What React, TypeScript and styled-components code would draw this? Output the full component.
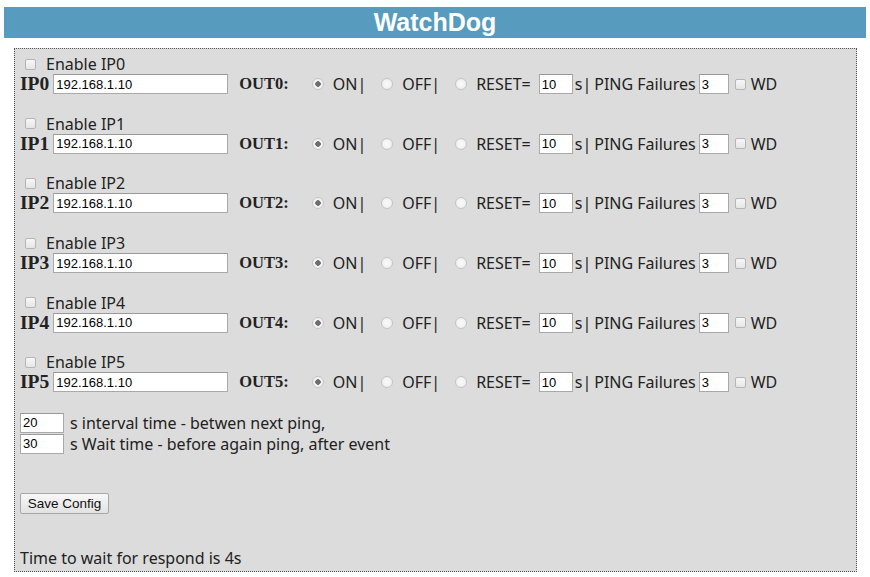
import React from 'react';
import styled, { createGlobalStyle } from 'styled-components';

const GlobalStyle = createGlobalStyle`
  body {
    margin: 0;
    background: #ffffff;
    font-family: 'Noto Sans', 'Liberation Sans', Arial, sans-serif;
    color: #222;
  }
`;

const Page = styled.div`
  padding: 7px 4px 0 4px;
`;

const Header = styled.h1`
  margin: 0;
  height: 31px;
  background: #579cbf;
  color: #fff;
  font-family: 'Liberation Sans', Arial, sans-serif;
  font-weight: bold;
  font-size: 25px;
  line-height: 31px;
  text-align: center;
`;

const Panel = styled.div`
  margin: 10px 9px 0 10px;
  padding: 5px 5px 3px 5px;
  background: #dcdcdc;
  border: 1px dotted #555;
  font-size: 16px;
  line-height: 20px;
`;

const Block = styled.div`
  margin-bottom: 19.7px;
`;

const Line = styled.div<{ $h?: number }>`
  display: flex;
  align-items: center;
  height: ${(p) => p.$h || 20}px;
  white-space: nowrap;
`;

const Check = styled.input.attrs({ type: 'checkbox' })<{ $ml?: number; $mr?: number }>`
  appearance: none;
  margin: 0 ${(p) => p.$mr ?? 4}px 0 ${(p) => p.$ml ?? 0}px;
  width: 11px;
  height: 11px;
  border: 1px solid #b5b5b5;
  border-radius: 2px;
  background: linear-gradient(#f7f7f7, #e6e6e6);
  flex-shrink: 0;
`;

const Radio = styled.input.attrs({ type: 'radio' })<{ $ml: number }>`
  appearance: none;
  margin: 0 9px 0 ${(p) => p.$ml}px;
  width: 12px;
  height: 12px;
  border: 1px solid #c4c4c4;
  border-radius: 50%;
  background: radial-gradient(circle, #fafafa 0, #ececec 100%);
  flex-shrink: 0;
  &:checked {
    background: radial-gradient(circle, #6d6d6d 0, #6d6d6d 2.5px, #f2f2f2 3px);
  }
`;

const Label = styled.b<{ $ml?: number }>`
  font-family: 'Liberation Serif', 'Times New Roman', serif;
  font-size: 19.5px;
  margin-left: ${(p) => p.$ml ?? 0}px;
`;

const OutLabel = styled(Label)`
  font-size: 16.5px;
`;

const Text = styled.span<{ $ml?: number }>`
  margin-left: ${(p) => p.$ml ?? 0}px;
`;

const Field = styled.input<{ $w: number; $ml?: number }>`
  box-sizing: border-box;
  width: ${(p) => p.$w}px;
  height: 20px;
  margin: 0 0 0 ${(p) => p.$ml ?? 0}px;
  padding: 0 2px;
  border: 1px solid #a9a9a9;
  border-top-color: #999;
  background: #fff;
  font-family: 'Liberation Sans', Arial, sans-serif;
  font-size: 13px;
  color: #000;
  outline: none;
`;

const Gap = styled.div<{ $h: number }>`
  height: ${(p) => p.$h}px;
`;

const Button = styled.button`
  box-sizing: border-box;
  height: 21px;
  width: 89px;
  padding: 0;
  border: 1px solid #a8a8a8;
  border-radius: 2px;
  background: linear-gradient(#f8f8f8, #e2e2e2);
  font-family: 'Liberation Sans', Arial, sans-serif;
  font-size: 13.5px;
  color: #111;
`;

const ips = [0, 1, 2, 3, 4, 5];

export default function App() {
  return (
    <>
      <GlobalStyle />
      <Page>
        <Header>WatchDog</Header>
        <Panel>
          {ips.map((i) => (
            <Block key={i}>
              <Line>
                <Check $ml={5} $mr={10} />
                <Text>Enable IP{i}</Text>
              </Line>
              <Line>
                <Label>IP{i}</Label>
                <Field $w={175} $ml={4} defaultValue="192.168.1.10" />
                <OutLabel $ml={11}>OUT{i}:</OutLabel>
                <Radio name={`out${i}`} $ml={23} defaultChecked />
                <Text>ON|</Text>
                <Radio name={`out${i}`} $ml={15} />
                <Text>OFF|</Text>
                <Radio name={`out${i}`} $ml={15} />
                <Text>RESET=</Text>
                <Field $w={34} $ml={8} defaultValue="10" />
                <Text $ml={2}>s|</Text>
                <Text $ml={3}>PING Failures</Text>
                <Field $w={30} $ml={3} defaultValue="3" />
                <Check $ml={6} $mr={5} />
                <Text>WD</Text>
              </Line>
            </Block>
          ))}
          <Line $h={21}>
            <Field $w={44} defaultValue="20" />
            <Text $ml={6}>s interval time - betwen next ping,</Text>
          </Line>
          <Line $h={21}>
            <Field $w={44} defaultValue="30" />
            <Text $ml={6}>s Wait time - before again ping, after event</Text>
          </Line>
          <Gap $h={38} />
          <Button>Save Config</Button>
          <Gap $h={34} />
          <Line>
            <Text>Time to wait for respond is 4s</Text>
          </Line>
        </Panel>
      </Page>
    </>
  );
}
